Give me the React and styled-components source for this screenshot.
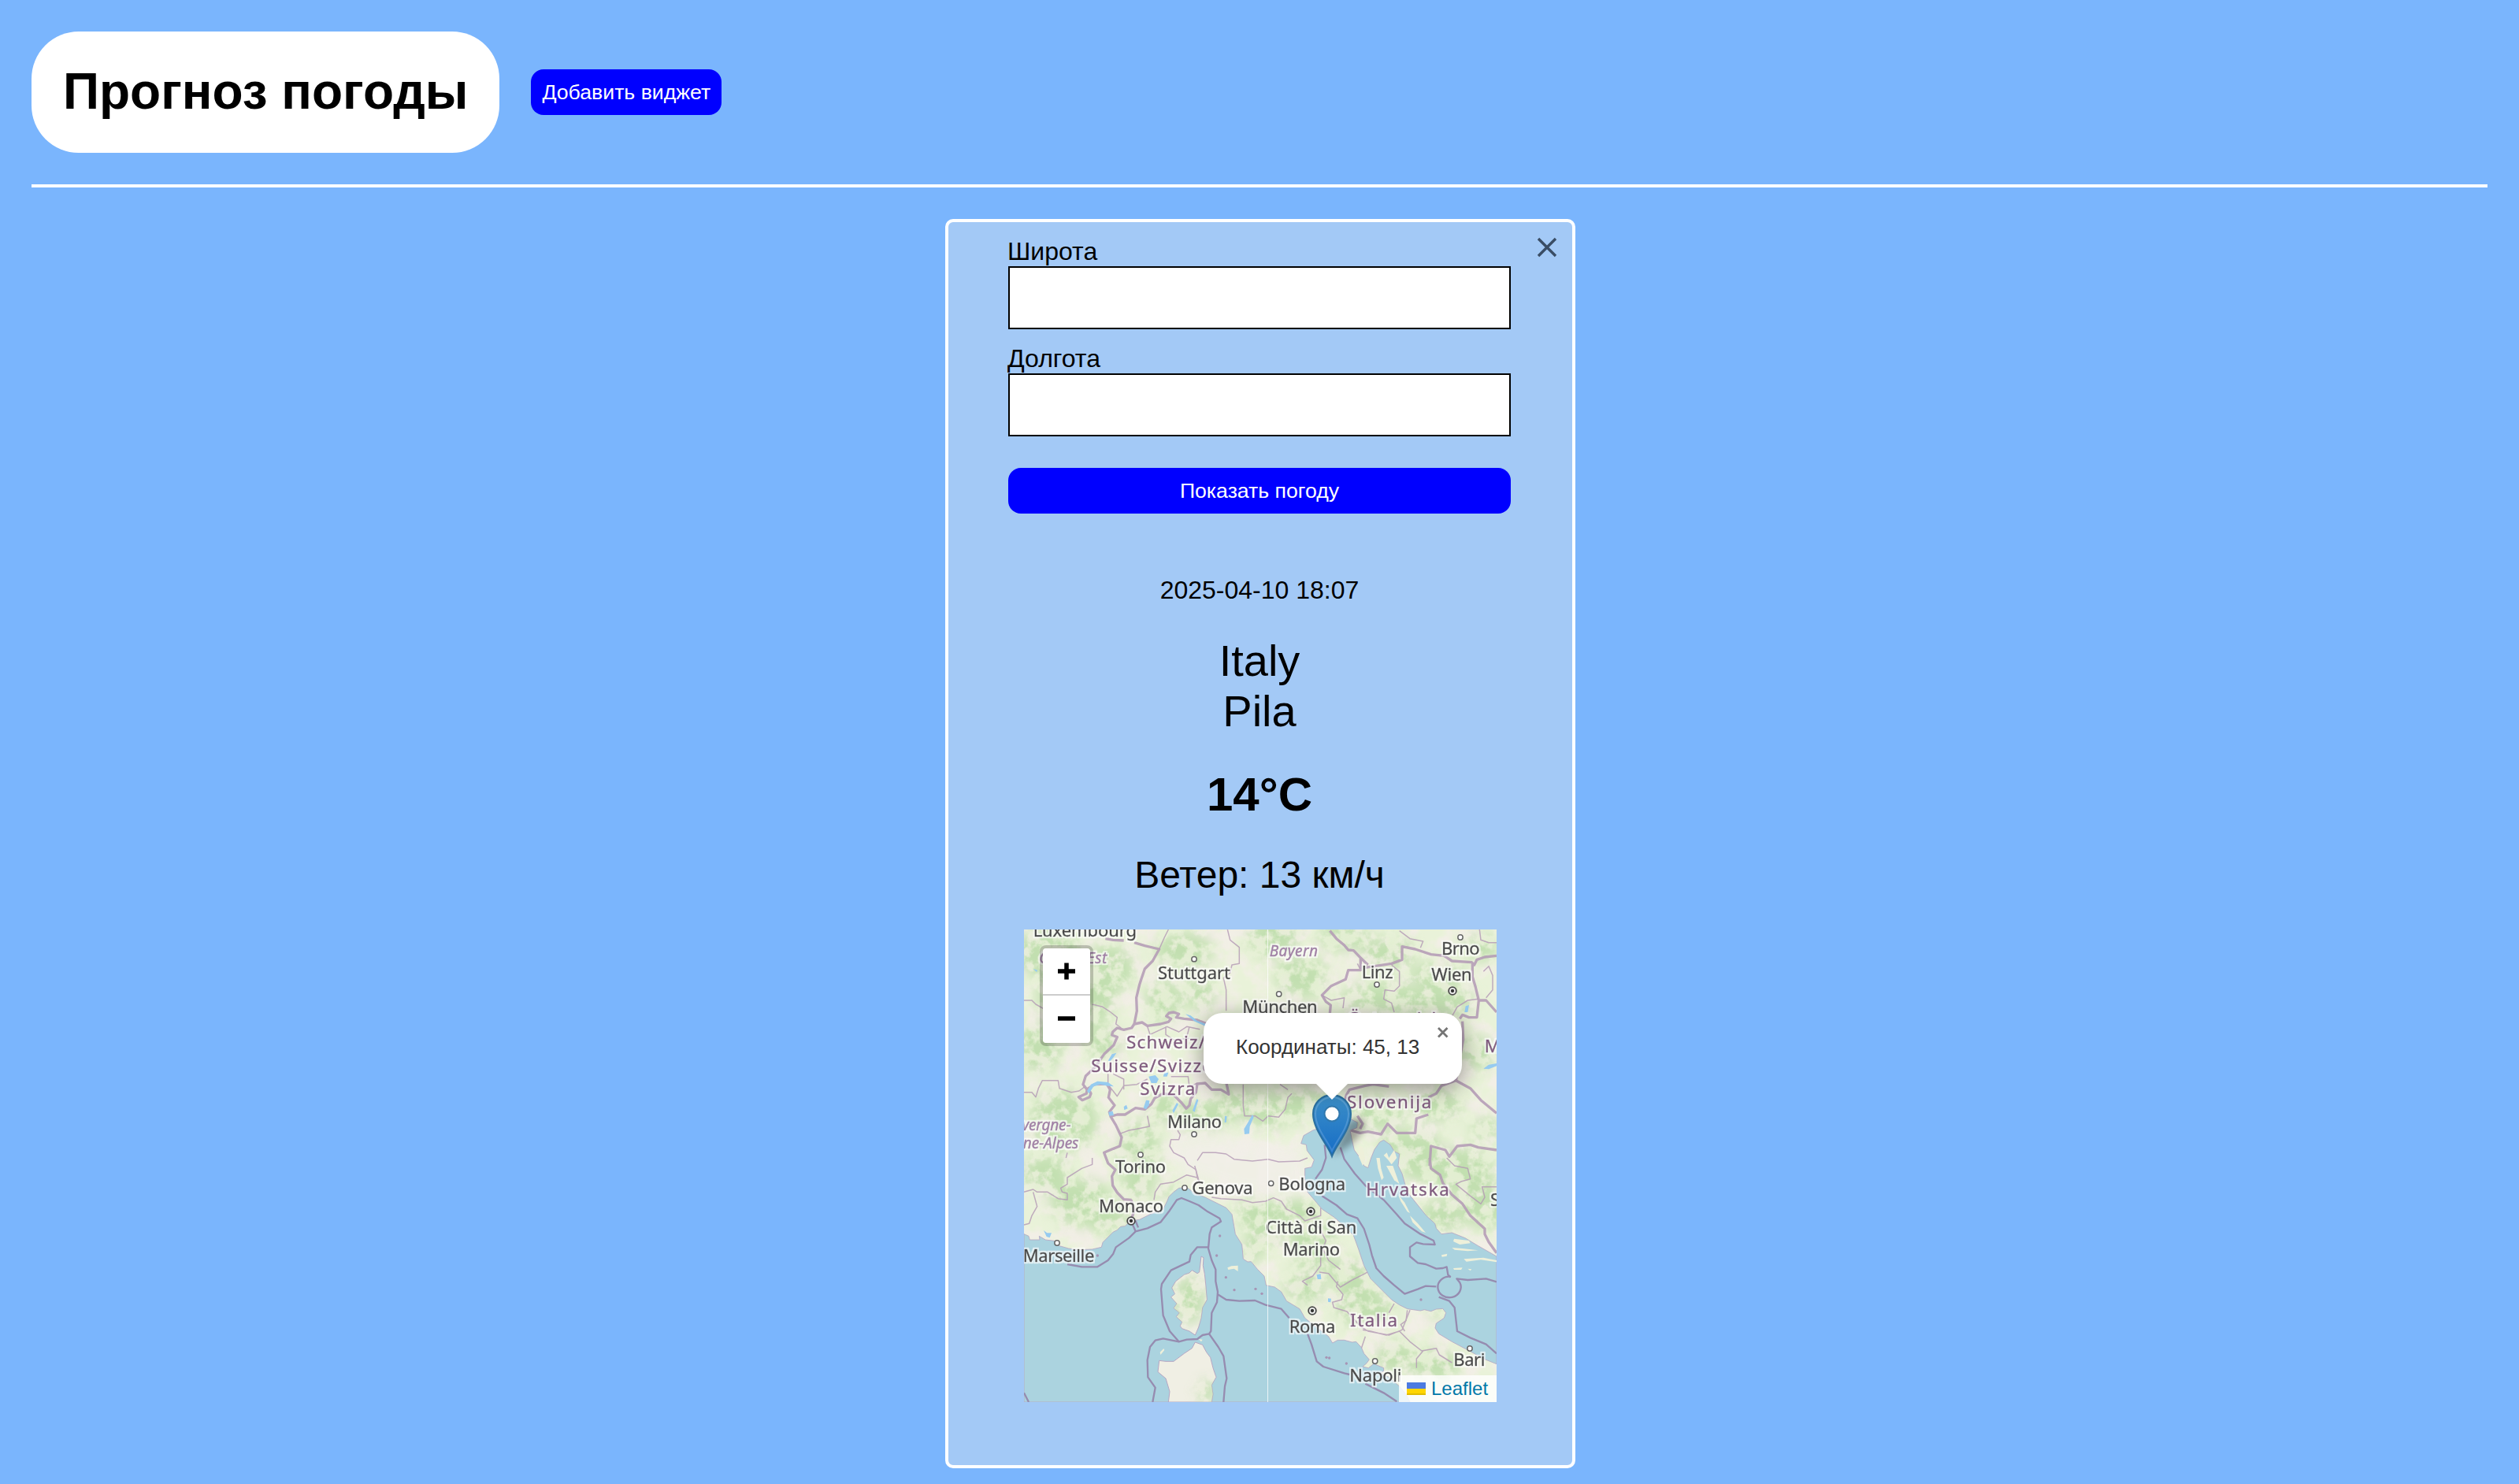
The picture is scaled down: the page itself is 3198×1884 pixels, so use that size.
import React from "react";
import styled, { createGlobalStyle } from "styled-components";

const GlobalStyle = createGlobalStyle`
  * { box-sizing: border-box; }
  body {
    margin: 0;
    background: #7ab5fd;
    color: #000;
    font-family: "Liberation Sans", Arial, sans-serif;
    font-size: 32px;
  }
`;

const Page = styled.div`
  min-height: 1884px;
  padding: 40px 40px 20px;
  display: flex;
  flex-direction: column;
`;

const Header = styled.header`
  display: flex;
  align-items: center;
  gap: 40px;
  padding-bottom: 40px;
  border-bottom: 4px solid #fff;
`;

const Title = styled.h1`
  margin: 0;
  padding: 39px 40px 41px;
  border-radius: 60px;
  background: #fff;
  font-size: 64px;
  line-height: 74px;
  white-space: nowrap;
`;

const Button = styled.button`
  height: 58px;
  padding: 0 14px;
  border: 0;
  border-radius: 16px;
  background: #0000ff;
  color: #fff;
  font-family: inherit;
  font-size: 26.667px;
  line-height: 30px;
  white-space: nowrap;
  width: ${(p) => (p.$wide ? "100%" : "auto")};
`;

const Widgets = styled.main`
  display: flex;
  justify-content: center;
  padding: 40px 0 0 2px;
`;

const Card = styled.section`
  position: relative;
  display: flex;
  flex-direction: column;
  align-items: center;
  width: 800px;
  height: 1586px;
  padding-top: 20px;
  border: 4px solid #fff;
  border-radius: 10px;
  background: #a3c9f6;
`;

const CloseButton = styled.button`
  position: absolute;
  top: 16px;
  right: 16px;
  width: 32px;
  height: 32px;
  padding: 0;
  border: 0;
  background: none;
  svg { display: block; }
`;

const Form = styled.form`
  width: 638px;
  margin-right: 2px;
  display: flex;
  flex-direction: column;
  gap: 20px;
`;

const Field = styled.label`
  display: block;
`;

const FieldName = styled.span`
  display: block;
  height: 36px;
  margin-left: -1px;
  line-height: 34px;
`;

const Input = styled.input`
  display: block;
  width: 100%;
  height: 80px;
  border: 2px solid #000;
  border-radius: 0;
  background: #fff;
`;

const Submit = styled.div`
  padding-top: 20px;
`;

const Report = styled.div`
  display: flex;
  flex-direction: column;
  align-items: center;
  margin-top: 79px;
  margin-right: 2px;
  text-align: center;
`;

const Stamp = styled.div`
  line-height: 36px;
`;

const Place = styled.div`
  margin-top: 40px;
  font-size: 56px;
  line-height: 64px;
`;

const Temperature = styled.div`
  margin-top: 40px;
  font-size: 60px;
  font-weight: 700;
  line-height: 68px;
`;

const Wind = styled.div`
  margin-top: 41px;
  font-size: 48px;
  line-height: 54px;
`;

const MapBox = styled.div`
  position: absolute;
  left: 96px;
  top: 898px;
  width: 600px;
  height: 600px;
  overflow: hidden;
  background: #abd3df;
`;

const Terrain = styled.svg`
  display: block;
  width: 600px;
  height: 600px;
`;

const ZoomControl = styled.div`
  position: absolute;
  left: 20px;
  top: 20px;
  width: 68px;
  border: 4px solid rgba(0, 0, 0, 0.2);
  border-radius: 8px;
  background-clip: padding-box;
`;

const ZoomButton = styled.div`
  display: flex;
  align-items: center;
  justify-content: center;
  height: 60px;
  padding-bottom: ${(p) => (p.$first ? "0" : "3px")};
  background: #fff;
  border-bottom: ${(p) => (p.$first ? "2px solid #ccc" : "0")};
  border-radius: ${(p) => (p.$first ? "4px 4px 0 0" : "0 0 4px 4px")};
`;

const Popup = styled.div`
  position: absolute;
  left: 228px;
  top: 106px;
  width: 328px;
  height: 90px;
  padding: 26px 0 0 41px;
  border-radius: 24px;
  background: #fff;
  box-shadow: 0 6px 28px rgba(0, 0, 0, 0.4);
  color: #333;
  font-size: 26px;
  line-height: 34px;
  white-space: nowrap;
`;

const PopupClose = styled.svg`
  position: absolute;
  left: 296px;
  top: 17px;
`;

const PopupTip = styled.svg`
  position: absolute;
  left: 370px;
  top: 195px;
`;

const Marker = styled.svg`
  position: absolute;
  left: 366px;
  top: 209px;
`;

const Attribution = styled.div`
  position: absolute;
  right: 0;
  bottom: 0;
  display: flex;
  align-items: center;
  gap: 7px;
  width: 124px;
  height: 34px;
  padding-left: 10px;
  background: rgba(255, 255, 255, 0.8);
  color: #0078a8;
  font-size: 24px;
  line-height: 34px;
`;

const SOUTH_SEA =
  "M30 1190L48 1198L52 1212L90 1212L88 1198L112 1212L145 1216L165 1235L200 1245L240 1250L290 1248L325 1240L330 1222L352 1200L370 1182L385 1175L398 1162L415 1160L437 1140L470 1135L510 1115L560 1095L575 1065L582 1048L600 1030L620 1015L650 1012L680 1035L720 1050L770 1075L800 1090L822 1115L830 1160L835 1190L860 1230L865 1285L882 1296L895 1295L920 1325L945 1350L952 1385L985 1392L1010 1410L1030 1445L1080 1475L1100 1510L1150 1550L1190 1580L1205 1605L1225 1594L1250 1594L1280 1602L1295 1600L1315 1622L1325 1645L1345 1668L1335 1682L1320 1695L1342 1700L1362 1684L1400 1700L1400 1712L1385 1720L1420 1735L1460 1770L1485 1800L1500 1830L30 1830Z";
const ADRIATIC =
  "M1085 845L1095 815L1130 795L1180 780L1270 750L1300 765L1298 785L1272 795L1280 835L1288 870L1310 900L1325 930L1340 938L1352 900L1365 868L1385 840L1400 832L1425 850L1440 875L1460 885L1455 930L1470 960L1490 1030L1530 1080L1562 1120L1595 1150L1600 1168L1620 1190L1660 1185L1710 1205L1760 1235L1830 1275L1830 1685L1780 1665L1730 1637L1660 1600L1610 1570L1596 1548L1600 1530L1630 1510L1637 1490L1625 1474L1600 1476L1580 1484L1555 1478L1540 1482L1490 1475L1460 1460L1430 1440L1390 1400L1350 1360L1325 1310L1305 1250L1285 1195L1250 1160L1210 1125L1165 1095L1140 1065L1110 1030L1100 980L1100 940L1125 935L1135 908L1108 872L1105 850Z";
const CORSICA =
  "M705 1275L714 1280L712 1310L718 1342L722 1380L727 1440L710 1470L705 1510L695 1545L682 1575L660 1560L632 1550L625 1540L632 1525L610 1505L622 1490L600 1472L612 1455L590 1430L605 1418L593 1395L608 1370L640 1345L660 1338L670 1328L690 1340L698 1335Z";
const SARDINIA =
  "M580 1830L585 1790L570 1740L540 1715L545 1672L570 1675L600 1675L640 1645L670 1625L682 1602L710 1612L725 1640L740 1660L750 1700L762 1735L745 1765L750 1800L745 1830Z";

const BORDERS = [
  "M340 65L370 70L410 72M450 80L490 92L545 105L520 150L490 180L478 215L470 240L458 290L460 340L450 390",
  "M450 390L480 384L500 397L550 390L580 382L590 370L572 360L582 348L600 345L620 352L610 365L640 370L690 375L740 395",
  "M450 390L440 405L410 412L385 405L368 420L365 432L385 440L372 470L335 505L300 555L265 588L255 620L270 640L268 655L238 668L252 680L280 668L285 655L275 635L300 620L345 618L358 640L352 670L375 700L355 725L360 742L385 735L415 735L455 710L490 715L515 695L528 672L560 655L600 660L630 690L648 712L660 700L665 675L685 650L690 618L720 615L745 640L780 640L810 658L800 610",
  "M360 742L380 775L402 822L395 855L370 865L335 880L350 920L378 945L365 970L368 1005L385 1032L410 1058L440 1060M438 1060L450 1100L437 1140",
  "M1195 35L1220 65L1250 90L1265 108L1285 110L1312 138L1340 165M1312 140L1312 185L1265 185L1255 220L1200 245L1165 280L1180 305L1198 318L1195 350",
  "M1330 175L1430 160L1470 145L1470 95L1520 105L1580 125L1630 130L1660 150L1735 155L1745 165L1755 145L1785 135L1830 130",
  "M1738 160L1738 210L1750 250L1762 300L1755 365L1725 365L1700 355L1690 370M1762 300L1790 300L1830 345M1700 380L1703 450L1690 520L1675 605",
  "M1675 605L1730 635L1770 680L1830 730M1675 605L1620 625L1600 655L1570 670M1570 735L1525 750L1520 805L1450 805L1415 770L1390 810L1340 800L1310 805L1275 795M1250 690L1258 660L1270 640L1330 625L1360 620L1420 628M1300 740L1320 770L1310 790",
  "M1575 930L1580 855L1635 870L1650 895L1680 855L1730 850L1760 860L1830 870",
  "M1575 900L1580 940L1615 965L1625 995L1660 1040L1700 1075L1730 1120L1785 1170L1785 1190L1800 1220L1830 1262",
];

const REGIONS = [
  "M580 30L565 60L545 105M30 300L60 300L75 315L110 335M290 315L330 325L360 345L385 365L380 390L400 405",
  "M30 650L60 650L75 668L85 635L100 605L160 605L165 635L210 650L240 645L260 630",
  "M500 740L508 780L460 790L430 795L395 808M805 30L815 70L850 98L850 160L822 165L815 195L790 215L800 260L800 340",
  "M615 795L625 812L620 830L590 830L585 855L600 880L640 900L655 925L685 945L690 975M690 910L710 880L760 880L800 885L830 905L900 912L960 905L1000 915L1080 912L1110 900",
  "M865 620L865 700L870 740L910 740L940 760L960 740L1000 745L1025 715L1035 670L1050 655M1005 620L1035 640",
  "M525 1060L530 1030L550 1000L600 992L650 965L690 975L700 1000L680 930M745 1050L780 1055L860 1060L900 1070L950 1065L980 1052L1010 1065L1030 1095L1080 1120L1100 1140L1160 1120L1160 1090",
  "M1150 1160L1180 1215L1160 1270L1160 1310L1130 1350L1090 1370L1110 1385M1155 1335L1190 1340L1215 1370L1235 1392L1280 1365L1330 1340L1370 1315L1325 1302M1170 1250L1190 1290L1235 1325",
  "M1225 1370L1220 1390L1245 1420L1240 1440L1205 1450L1210 1470L1260 1485L1310 1540L1340 1560L1420 1575L1470 1555L1500 1480M1310 1640L1330 1580M1320 1555L1350 1560L1410 1575L1460 1560L1500 1600L1545 1635L1600 1625L1612 1650L1660 1680",
  "M1440 1455L1420 1490M1490 1480L1485 1520L1465 1535L1480 1560M1550 1635L1525 1665L1525 1700M190 900L195 880M290 900L290 925L250 940L195 975L195 1000L170 1015L175 1030L195 1035L195 1060L160 1055L120 1030L80 1030L65 1020L30 1030M65 1030L80 1085L60 1120L50 1150L30 1155",
  "M650 440L660 400M500 400L510 430L575 400L620 420L650 400L700 410M350 580L350 620L385 665L410 625L460 620L500 600M570 400L570 430L600 450L660 445M370 580L410 600L410 640M590 590L655 590L660 630L690 615",
  "M1310 180L1300 160M1430 165L1460 190L1460 245L1440 265L1405 260L1400 295L1430 310L1440 345M1165 280L1200 300L1250 290L1245 330M1460 35L1500 65L1550 75L1540 100M1765 30L1770 70L1800 80L1830 80M1780 190L1800 170L1815 205L1815 260L1790 290M1655 370L1680 325L1720 300L1760 295",
  "M1640 900L1670 930L1720 940L1730 980L1695 990L1675 1000L1730 1045L1770 1075L1785 1050L1775 1010L1830 1010",
];

const SEA_LINES = [
  "M195 1305L250 1315L310 1315L350 1290L370 1265L380 1240L430 1205L455 1180L500 1168L550 1145L585 1100L612 1060L630 1053L660 1065L695 1080L730 1105L775 1130L780 1142L745 1165L737 1190L732 1245L745 1290L760 1325L760 1370L768 1410L765 1450L745 1490L742 1560L735 1570L710 1575L690 1590L650 1592L620 1600L585 1560L560 1500L552 1400L555 1380L590 1328L660 1295L665 1270L690 1240L732 1240",
  "M440 1145L455 1180M455 1140L465 1165",
  "M768 1420L800 1440L850 1445L910 1443L950 1460L1010 1475L1040 1510",
  "M1110 1570L1125 1610L1145 1675L1170 1695L1250 1720L1270 1725M1330 1760L1400 1795L1450 1828",
  "M520 1830L530 1775L502 1735L500 1670L510 1620L530 1595L560 1588L620 1600M735 1570L770 1620L790 1655L795 1690L802 1740L795 1770L790 1830M30 1795L48 1830",
  "M1175 850L1180 900L1165 945L1140 980M1235 860L1250 905L1290 960L1330 1005L1400 1060L1450 1115L1480 1150L1540 1190L1590 1215L1595 1230L1550 1228L1525 1222L1500 1240L1500 1275L1530 1300L1560 1305L1600 1322L1625 1320L1640 1315L1645 1345L1655 1355",
  "M1165 1045L1220 1080L1260 1115L1300 1130L1325 1170L1345 1230L1355 1270L1372 1320L1400 1350L1440 1385L1480 1418L1530 1400L1560 1388L1600 1390",
  "M1655 1352A44 40 0 1 0 1690 1375M1690 1375L1678 1360L1720 1365L1790 1360L1830 1372M1610 1430L1650 1445L1670 1470L1680 1560L1730 1585L1790 1610L1830 1645",
];

const FORESTS = [
  [120, 120, 130, 90], [230, 280, 150, 130], [90, 480, 90, 90], [180, 760, 130, 120], [330, 460, 70, 60],
  [350, 180, 100, 90], [640, 110, 110, 70], [560, 300, 70, 80], [700, 270, 60, 70], [470, 890, 80, 130],
  [560, 700, 60, 60], [700, 740, 120, 60], [840, 700, 80, 60], [960, 720, 90, 70], [110, 960, 90, 70],
  [250, 1070, 120, 90], [460, 1010, 60, 50], [350, 1130, 80, 60], [590, 1030, 60, 20], [920, 1110, 90, 60],
  [950, 1180, 60, 60], [1060, 1100, 90, 50], [1130, 1220, 90, 100], [1100, 1390, 80, 60], [1260, 1330, 90, 40],
  [1300, 1430, 90, 80], [1330, 1480, 110, 60], [1450, 1660, 80, 60], [1600, 1690, 90, 60], [1600, 1490, 30, 20],
  [1250, 60, 100, 50], [1420, 120, 100, 60], [1400, 290, 170, 60], [1600, 300, 150, 60], [1600, 200, 110, 40],
  [1770, 100, 70, 50], [1100, 700, 120, 60], [1370, 730, 110, 60], [1600, 700, 100, 60], [1500, 850, 120, 60],
  [1790, 790, 60, 40], [1540, 930, 80, 60], [1690, 950, 130, 90], [1780, 1080, 90, 90], [1620, 1120, 80, 60],
  [660, 1440, 60, 90], [730, 1790, 40, 40], [980, 60, 100, 80], [1090, 210, 100, 80], [900, 1250, 40, 50], [1760, 500, 70, 60],
];

const LAKES = [
  "M270 645L285 620L310 608L350 612L372 628L350 626L320 620L295 628L278 655Z",
  "M505 590L530 585L543 600L535 615L515 615Z", "M565 575L580 575L575 590L560 590Z",
  "M410 705L420 698L425 712L412 718Z", "M485 710L495 680L508 682L506 700L495 715Z", "M352 725L368 722L372 738L355 740Z",
  "M645 352L665 358L690 378L740 395L720 398L680 380Z", "M595 720L612 690L618 695L600 730Z", "M672 720L688 675L694 680L680 725Z",
  "M350 530L365 505L382 500L372 515L358 532Z", "M870 810L868 790L880 770L900 735L905 745L890 780L888 808Z", "M795 740L803 742L800 765L794 765Z",
  "M105 1176L118 1186L135 1186L128 1204L116 1200Z", "M1145 1345L1160 1342L1162 1362L1148 1362Z", "M1188 1435L1200 1436L1198 1450L1188 1448Z",
  "M1708 345L1712 322L1725 318L1720 345Z", "M1780 560L1800 545L1830 540L1830 550L1800 562Z", "M65 180L82 185L78 192Z",
];

const ISLANDS = [
  "M1305 855L1320 858L1330 905L1320 930L1305 895Z", "M1400 890L1412 880L1420 900L1440 870L1450 900L1430 925L1415 905Z",
  "M1372 900L1385 900L1390 940L1400 975L1392 985L1378 940Z", "M1410 930L1435 930L1460 1000L1440 985Z", "M1455 1040L1480 1070L1500 1110L1490 1105L1465 1065Z",
  "M1500 1120L1530 1150L1560 1185L1545 1180L1510 1145Z", "M1668 1208L1725 1215L1730 1225L1690 1230L1665 1218Z",
  "M1660 1242L1700 1245L1760 1252L1720 1255L1670 1250Z", "M1705 1285L1780 1280L1830 1290L1830 1297L1770 1288L1715 1295Z",
  "M1620 1270L1642 1265L1640 1274L1622 1277Z", "M1665 1320L1700 1318L1695 1326L1668 1326Z", "M1720 1322L1735 1324L1730 1330Z",
  "M805 1318L820 1312L845 1310L845 1332L830 1322L808 1326Z", "M548 1640L562 1626L565 1632L550 1650Z", "M695 1590L710 1592L705 1600Z",
];

const SPECKS = [[776, 1197], [764, 1272], [799, 1355], [831, 1403], [912, 1399], [936, 1417], [1182, 1660], [1193, 1662], [1258, 1683], [1542, 1440], [310, 1272]];

const CITIES = [
  ["Luxembourg", 65, 56, 394], ["Stuttgart", 540, 218, 276], ["München", 862, 348, 286], ["Linz", 1316, 217, 120],
  ["Brno", 1620, 126, 146], ["Wien", 1582, 225, 154], ["Milano", 576, 785, 207], ["Torino", 378, 956, 192],
  ["Genova", 670, 1038, 232], ["Monaco", 315, 1106, 246], ["Marseille", 26, 1295, 272], ["Bologna", 1000, 1022, 254],
  ["Città di San", 951, 1189, 346], ["Marino", 1016, 1272, 217], ["Roma", 1040, 1566, 176], ["Napoli", 1270, 1751, 198],
  ["Bari", 1666, 1693, 120], ["Sarajevo", 1806, 1083, 270],
];

const COUNTRIES = [
  ["Schweiz/", 420, 483, 300], ["Suisse/Svizzera/", 286, 572, 562], ["Svizra", 472, 660, 210], ["Österreich", 1264, 392, 360],
  ["Slovenija", 1260, 710, 322], ["Hrvatska", 1333, 1045, 316], ["Italia", 1272, 1542, 180], ["Magyarország", 1784, 498, 480],
];

const PROVINCES = [["Grand Est", 88, 160, 258], ["Bayern", 965, 131, 184], ["vergne-", 22, 795, 186], ["ne-Alpes", 26, 864, 212]];

const DOTS = [[678, 143], [678, 810], [474, 888], [642, 1014], [156, 1224], [1001, 276], [1374, 240], [1692, 60], [971, 997], [1367, 1674], [1728, 1626]];
const CAPITALS = [[438, 1140], [1662, 264], [1122, 1104], [1128, 1482]];

function MapLabels({ items, size, color, italic }) {
  return (
    <g fontSize={size} fontStyle={italic ? "italic" : "normal"} fill={color} stroke={color} strokeWidth="1.4">
      {items.map(([text, x, y, width]) => (
        <text key={text} x={x} y={y} textLength={width}>{text}</text>
      ))}
    </g>
  );
}

function MapTerrain() {
  return (
    <Terrain viewBox="30 30 1800 1800" aria-hidden="true">
      <defs>
        <filter id="woods" x="0" y="0" width="100%" height="100%" colorInterpolationFilters="sRGB">
          <feTurbulence type="fractalNoise" baseFrequency="0.022" numOctaves="4" seed="8" />
          <feColorMatrix values="0 0 0 0 0.76  0 0 0 0 0.875  0 0 0 0 0.69  0 5 0 0 -2" />
        </filter>
        <filter id="meadow" x="0" y="0" width="100%" height="100%" colorInterpolationFilters="sRGB">
          <feTurbulence type="fractalNoise" baseFrequency="0.012" numOctaves="4" seed="21" />
          <feColorMatrix values="0 0 0 0 0.915  0 0 0 0 0.95  0 0 0 0 0.85  0 4 0 0 -1.4" />
        </filter>
        <filter id="feather" x="-20%" y="-20%" width="140%" height="140%">
          <feGaussianBlur stdDeviation="26" />
        </filter>
        <filter id="soften"><feGaussianBlur stdDeviation="1.5" /></filter>
        <filter id="halo" x="0" y="0" width="100%" height="100%">
          <feGaussianBlur in="SourceGraphic" stdDeviation="0.9" result="label" />
          <feMorphology in="SourceAlpha" operator="dilate" radius="4.5" />
          <feGaussianBlur stdDeviation="1.5" result="spread" />
          <feFlood floodColor="#fff" floodOpacity="0.65" />
          <feComposite in2="spread" operator="in" result="glow" />
          <feMerge><feMergeNode in="glow" /><feMergeNode in="label" /></feMerge>
        </filter>
        <mask id="forestMask">
          <g filter="url(#feather)">
            {FORESTS.map(([x, y, rx, ry], i) => <ellipse key={i} cx={x} cy={y} rx={rx} ry={ry} fill="#fff" />)}
          </g>
        </mask>
        <clipPath id="isles"><path d={CORSICA} /><path d={SARDINIA} /></clipPath>
      </defs>

      <rect x="30" y="30" width="1800" height="1800" fill="#f2efe6" />
      <rect x="30" y="30" width="1800" height="1800" filter="url(#meadow)" />
      <g mask="url(#forestMask)">
        <rect x="30" y="30" width="1800" height="1800" fill="#dcebcb" opacity="0.55" />
        <rect x="30" y="30" width="1800" height="1800" filter="url(#woods)" />
      </g>
      <path d="M560 850Q700 790 850 830T1100 860L1105 1040L1000 1040L850 1030L640 960Z" fill="#f2efe9" opacity="0.8" filter="url(#feather)" />

      <g filter="url(#soften)">
        <g fill="none" stroke="#b399b5" strokeLinejoin="round">
          <g strokeWidth="4.5" opacity="0.8">{REGIONS.map((d) => <path key={d} d={d} />)}</g>
          <g strokeWidth="10" opacity="0.85">{BORDERS.map((d) => <path key={d} d={d} />)}</g>
        </g>
        <g fill="#96cbf0">{LAKES.map((d) => <path key={d} d={d} />)}</g>
        <g fill="#abd3df" stroke="#b5a6c3" strokeWidth="2.5">
          <path d={SOUTH_SEA} />
          <path d={ADRIATIC} />
        </g>
        <g fill="#f0efe4" stroke="#b5a6c3" strokeWidth="3">
          <path d={CORSICA} />
          <path d={SARDINIA} />
        </g>
        <g fill="#eef0da">{ISLANDS.map((d) => <path key={d} d={d} />)}</g>
        <g fill="#a694b4">{SPECKS.map(([x, y]) => <circle key={x} cx={x} cy={y} r="5" />)}</g>
      </g>
      <g clipPath="url(#isles)">
        <g mask="url(#forestMask)">
          <rect x="530" y="1260" width="260" height="570" fill="#e2edcf" opacity="0.7" />
          <rect x="530" y="1260" width="260" height="570" filter="url(#woods)" />
        </g>
      </g>
      <g filter="url(#soften)" fill="none" stroke="#968cb0" strokeWidth="7" strokeLinejoin="round">
        {SEA_LINES.map((d) => <path key={d} d={d} />)}
      </g>

      <g filter="url(#halo)" fontFamily="'Noto Sans', 'Open Sans', sans-serif">
        <rect x="30" y="30" width="1800" height="1800" fill="none" />
        <MapLabels items={PROVINCES} size="57" color="#a07fa5" italic />
        <MapLabels items={COUNTRIES} size="67" color="#80597f" />
        <MapLabels items={CITIES} size="66" color="#474747" />
      </g>
      <g filter="url(#soften)">
        {DOTS.map(([x, y]) => <circle key={`${x}-${y}`} cx={x} cy={y} r="9.5" fill="#fff" stroke="#666" strokeWidth="4.5" />)}
        {CAPITALS.map(([x, y]) => (
          <g key={`${x}-${y}`}>
            <circle cx={x} cy={y} r="14.5" fill="#eee" stroke="#4a4a4a" strokeWidth="5.5" />
            <circle cx={x} cy={y} r="6.5" fill="#333" />
          </g>
        ))}
      </g>
      <rect x="957" y="30" width="3" height="1800" fill="#fff" opacity="0.75" />
    </Terrain>
  );
}

function LocationMap() {
  return (
    <MapBox>
      <MapTerrain />
      <Marker width="90" height="86" viewBox="0 0 90 86">
        <defs>
          <linearGradient id="pin" x1="0" y1="0" x2="0" y2="1">
            <stop offset="0" stopColor="#3d90c8" /><stop offset="1" stopColor="#156cc6" />
          </linearGradient>
          <filter id="pinShadow" x="-50%" y="-50%" width="200%" height="200%"><feGaussianBlur stdDeviation="4" /></filter>
        </defs>
        <path d="M26 80L44 38Q62 22 66 36Q66 54 40 70Z" fill="#000" opacity="0.32" filter="url(#pinShadow)" />
        <path d="M25 79C20 65 1 45 1 25A24 24 0 0 1 49 25C49 45 30 65 25 79Z" fill="url(#pin)" stroke="#2b6f9f" strokeWidth="2" />
        <path d="M25 72C20 60 4 43 4 25A21 21 0 0 1 46 25C46 43 30 60 25 72Z" fill="none" stroke="#fff" strokeOpacity="0.16" strokeWidth="2" />
        <circle cx="25" cy="25" r="9.5" fill="#fff" stroke="#3179ae" strokeWidth="2" />
      </Marker>
      <Popup>
        Координаты: 45, 13
        <PopupClose width="16" height="16" viewBox="0 0 16 16">
          <path d="M2 2L13.5 13.5M13.5 2L2 13.5" stroke="#757575" strokeWidth="2.8" />
        </PopupClose>
      </Popup>
      <PopupTip width="42" height="22" viewBox="0 0 42 22"><path d="M0 0H42L21 21Z" fill="#fff" /></PopupTip>
      <ZoomControl>
        <ZoomButton $first>
          <svg width="22" height="22" viewBox="0 0 22 22"><path d="M11 0.5V21.5M0 11H22" stroke="#000" strokeWidth="5.5" /></svg>
        </ZoomButton>
        <ZoomButton>
          <svg width="22" height="6" viewBox="0 0 22 6"><path d="M0 3H22" stroke="#000" strokeWidth="5.5" /></svg>
        </ZoomButton>
      </ZoomControl>
      <Attribution>
        <svg width="24" height="16" viewBox="0 0 12 8"><path fill="#4C7BE1" d="M0 0h12v4H0z" /><path fill="#FFD500" d="M0 4h12v3H0z" /><path fill="#E0BC00" d="M0 7h12v1H0z" /></svg>
        Leaflet
      </Attribution>
    </MapBox>
  );
}

export default function App() {
  return (
    <>
      <GlobalStyle />
      <Page>
        <Header>
          <Title>Прогноз погоды</Title>
          <Button type="button">Добавить виджет</Button>
        </Header>
        <Widgets>
          <Card>
            <CloseButton type="button" aria-label="Закрыть">
              <svg width="32" height="32" viewBox="0 0 32 32">
                <path d="M5 5L27 27M27 5L5 27" stroke="#1c2a3c" strokeOpacity="0.78" strokeWidth="3.4" />
              </svg>
            </CloseButton>
            <Form>
              <Field><FieldName>Широта</FieldName><Input /></Field>
              <Field><FieldName>Долгота</FieldName><Input /></Field>
              <Submit><Button type="button" $wide>Показать погоду</Button></Submit>
            </Form>
            <Report>
              <Stamp>2025-04-10 18:07</Stamp>
              <Place>Italy<br />Pila</Place>
              <Temperature>14°C</Temperature>
              <Wind>Ветер: 13 км/ч</Wind>
            </Report>
            <LocationMap />
          </Card>
        </Widgets>
      </Page>
    </>
  );
}
